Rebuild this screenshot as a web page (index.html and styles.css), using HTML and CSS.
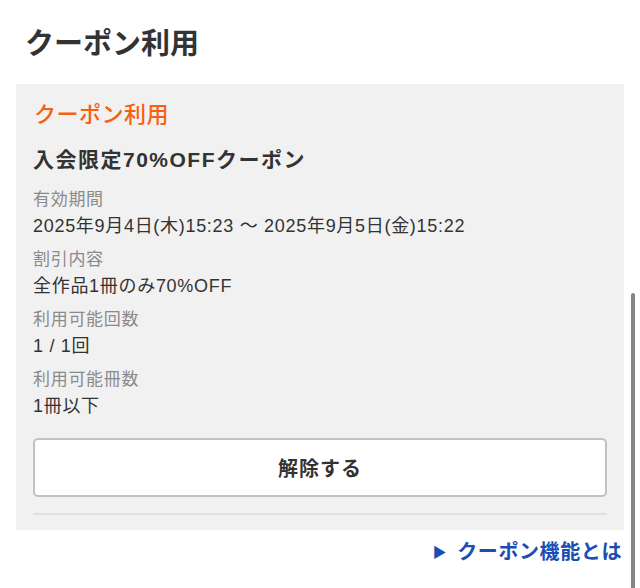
FILE: index.html
```html
<!DOCTYPE html>
<html lang="ja">
<head>
<meta charset="utf-8">
<title>クーポン利用</title>
<link rel="stylesheet" href="styles.css">
</head>
<body>
<div class="page">
  <h1 class="page-title">クーポン利用</h1>
  <section class="panel">
    <h2 class="panel-heading">クーポン利用</h2>
    <p class="coupon-name">入会限定70%OFFクーポン</p>
    <dl class="details">
      <dt>有効期間</dt>
      <dd>2025年9月4日(木)15:23 〜 2025年9月5日(金)15:22</dd>
      <dt>割引内容</dt>
      <dd>全作品1冊のみ70%OFF</dd>
      <dt>利用可能回数</dt>
      <dd>1 / 1回</dd>
      <dt>利用可能冊数</dt>
      <dd>1冊以下</dd>
    </dl>
    <button class="release-btn" type="button">解除する</button>
    <hr class="divider">
  </section>
  <div class="help">
    <a class="help-link" href="#"><span class="tri">▶</span>クーポン機能とは</a>
  </div>
</div>
<div class="scrollbar"></div>
</body>
</html>
```

FILE: styles.css
```css
html, body {
  margin: 0;
  padding: 0;
  background: #fff;
}
body {
  font-family: "Liberation Sans", "Noto Sans CJK JP", sans-serif;
  color: #333;
  width: 640px;
  height: 588px;
  overflow: hidden;
  position: relative;
}
.page {
  display: flex;
  flex-direction: column;
}
.page-title {
  margin: 0;
  padding: 24px 0 0 25px;
  height: 84px;
  box-sizing: border-box;
  font-size: 29px;
  line-height: 40px;
  font-weight: 700;
  color: #333;
}
.panel {
  margin: 0 16px;
  background: #f1f1f1;
  padding: 15px 17px 15px 17px;
  display: flex;
  flex-direction: column;
}
.panel-heading {
  margin: 0;
  font-size: 22px;
  line-height: 32px;
  font-weight: 500;
  letter-spacing: 0.5px;
  color: #f6600f;
  padding-left: 1px;
}
.coupon-name {
  margin: 15px 0 0 0;
  font-size: 21px;
  line-height: 28px;
  font-weight: 700;
  letter-spacing: 1.5px;
  color: #333;
}
.details {
  margin: 13px 0 0 0;
}
.details dt {
  font-size: 17px;
  line-height: 26px;
  letter-spacing: 0.7px;
  color: #8a8a8a;
}
.details dd {
  margin: 0 0 8px 0;
  font-size: 18px;
  line-height: 26px;
  letter-spacing: 0.7px;
  color: #333;
}
.release-btn {
  margin-top: 11px;
  height: 59px;
  background: #fff;
  border: 2px solid #c2c2c2;
  border-radius: 5px;
  font-family: inherit;
  font-size: 20px;
  font-weight: 700;
  letter-spacing: 1px;
  color: #333;
}
.divider {
  margin: 16px 0 0 0;
  border: 0;
  height: 2px;
  background: #e0e0e0;
}
.help {
  display: flex;
  justify-content: flex-end;
  padding: 7px 18px 0 0;
}
.help-link {
  font-size: 20px;
  line-height: 30px;
  font-weight: 700;
  letter-spacing: 0.6px;
  color: #1a4eb5;
  text-decoration: none;
}
.tri {
  font-size: 14px;
  margin-right: 10px;
  vertical-align: 2px;
}
.scrollbar {
  position: absolute;
  left: 631px;
  top: 293px;
  width: 4px;
  height: 300px;
  border-radius: 2px;
  background: #858585;
}
```
